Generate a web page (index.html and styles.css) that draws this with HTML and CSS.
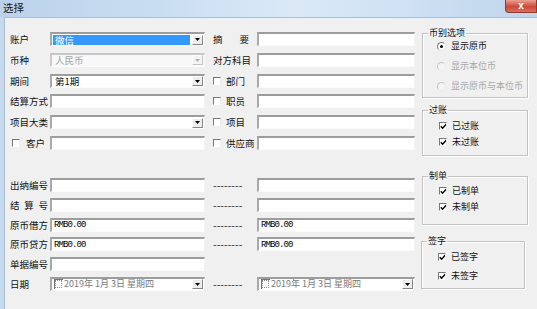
FILE: index.html
```html
<!DOCTYPE html>
<html lang="zh-CN">
<head>
    <meta charset="UTF-8">
    <title>选择</title>
    <link rel="stylesheet" href="styles.css">
</head>
<body>

<div class="window">
    <div class="titlebar">
        <span class="title">选择</span>
        <div class="close">x</div>
    </div>
    <div class="frame">
        <div class="client">

            <div class="main">
                <!-- upper block: account, currency, period ... -->
                <div class="grid top">
                    <span class="lbl">账户</span>
                    <div class="field combo"><span class="sel">微信</span><span class="dd"><svg width="5" height="3"><polygon points="0,0 5,0 2.5,3" fill="#000"/></svg></span></div>
                    <span class="lbl mid"><span class="spread">
                        <span>摘</span><span>要</span></span></span>
                    <div class="field"></div>

                    <span class="lbl">币种</span>
                    <div class="field combo disabled"><span class="val">人民币</span><span class="dd"><svg width="5" height="3"><polygon points="0,0 5,0 2.5,3" fill="#b0b0b0"/></svg></span></div>
                    <span class="lbl mid">对方科目</span>
                    <div class="field"></div>

                    <span class="lbl">期间</span>
                    <div class="field combo"><span class="val">第1期</span><span class="dd"><svg width="5" height="3"><polygon points="0,0 5,0 2.5,3" fill="#000"/></svg></span></div>
                    <span class="lbl mid chk"><span class="cb"></span><span>部门</span></span>
                    <div class="field"></div>

                    <span class="lbl">结算方式</span>
                    <div class="field"></div>
                    <span class="lbl mid chk"><span class="cb"></span><span>职员</span></span>
                    <div class="field"></div>

                    <span class="lbl">项目大类</span>
                    <div class="field combo"><span class="val"></span><span class="dd"><svg width="5" height="3"><polygon points="0,0 5,0 2.5,3" fill="#000"/></svg></span></div>
                    <span class="lbl mid chk"><span class="cb"></span><span>项目</span></span>
                    <div class="field"></div>

                    <span class="lbl chk left"><span class="cb"></span><span>客户</span></span>
                    <div class="field"></div>
                    <span class="lbl mid chk"><span class="cb"></span><span>供应商</span></span>
                    <div class="field"></div>
                </div>

                <!-- lower block: ranges from / to -->
                <div class="grid bottom">
                    <span class="lbl">出纳编号</span>
                    <div class="field"></div>
                    <span class="dash">--------</span>
                    <div class="field"></div>

                    <span class="lbl"><span class="spread wide">
                        <span>结</span><span>算</span><span>号</span></span></span>
                    <div class="field"></div>
                    <span class="dash">--------</span>
                    <div class="field"></div>

                    <span class="lbl">原币借方</span>
                    <div class="field"><span class="mono">RMB0.00</span></div>
                    <span class="dash">--------</span>
                    <div class="field"><span class="mono">RMB0.00</span></div>

                    <span class="lbl">原币贷方</span>
                    <div class="field"><span class="mono">RMB0.00</span></div>
                    <span class="dash">--------</span>
                    <div class="field"><span class="mono">RMB0.00</span></div>

                    <span class="lbl">单据编号</span>
                    <div class="field"></div>
                    <span></span>
                    <span></span>

                    <span class="lbl">日期</span>
                    <div class="field combo date"><span class="dcb"></span><span class="val">2019年 1月 3日 星期四</span><span class="dd"><svg width="5" height="3"><polygon points="0,0 5,0 2.5,3" fill="#000"/></svg></span></div>
                    <span class="dash">--------</span>
                    <div class="field combo date"><span class="dcb"></span><span class="val">2019年 1月 3日 星期四</span><span class="dd"><svg width="5" height="3"><polygon points="0,0 5,0 2.5,3" fill="#000"/></svg></span></div>
                </div>
            </div>

            <div class="side">
                <fieldset class="group g1">
                    <legend>币别选项</legend>
                    <div class="opt"><span class="rb on"></span><span>显示原币</span></div>
                    <div class="opt off"><span class="rb"></span><span>显示本位币</span></div>
                    <div class="opt off"><span class="rb"></span><span>显示原币与本位币</span></div>
                </fieldset>
                <fieldset class="group g2">
                    <legend>过账</legend>
                    <div class="opt"><span class="cb"><svg width="7" height="7"><polyline points="0.8,3.2 2.6,5.2 6.4,1" fill="none" stroke="#000" stroke-width="1.4"/></svg></span><span>已过账</span></div>
                    <div class="opt"><span class="cb"><svg width="7" height="7"><polyline points="0.8,3.2 2.6,5.2 6.4,1" fill="none" stroke="#000" stroke-width="1.4"/></svg></span><span>未过账</span></div>
                </fieldset>
                <fieldset class="group g3">
                    <legend>制单</legend>
                    <div class="opt"><span class="cb"><svg width="7" height="7"><polyline points="0.8,3.2 2.6,5.2 6.4,1" fill="none" stroke="#000" stroke-width="1.4"/></svg></span><span>已制单</span></div>
                    <div class="opt"><span class="cb"><svg width="7" height="7"><polyline points="0.8,3.2 2.6,5.2 6.4,1" fill="none" stroke="#000" stroke-width="1.4"/></svg></span><span>未制单</span></div>
                </fieldset>
                <fieldset class="group g4">
                    <legend>签字</legend>
                    <div class="opt"><span class="cb"><svg width="7" height="7"><polyline points="0.8,3.2 2.6,5.2 6.4,1" fill="none" stroke="#000" stroke-width="1.4"/></svg></span><span>已签字</span></div>
                    <div class="opt"><span class="cb"><svg width="7" height="7"><polyline points="0.8,3.2 2.6,5.2 6.4,1" fill="none" stroke="#000" stroke-width="1.4"/></svg></span><span>未签字</span></div>
                </fieldset>
            </div>

        </div>
    </div>
</div>

</body>
</html>
```

FILE: styles.css
```css
* {
    box-sizing: border-box;
}
body {
    margin: 0;
    width: 537px;
    height: 309px;
    overflow: hidden;
    font-family: "Noto Sans CJK SC", "Liberation Sans", sans-serif;
    font-size: 9.5px;
    color: #111;
    background-color: #c6daef;
}
.window {
    display: flex;
    flex-direction: column;
    height: 309px;
}
.titlebar {
    height: 17px;
    display: flex;
    justify-content: space-between;
    align-items: flex-start;
    background: linear-gradient(to right, #bcd2ea 0%, #cadef2 30%, #dbe9f7 55%, #cfe1f3 75%, #bfd5ec 100%);
}
.title {
    font-size: 10.5px;
    line-height: 16px;
    padding-left: 3px;
    color: #1a1a1a;
}
.close {
    width: 32px;
    height: 13px;
    border: 1px solid #8e3b2e;
    border-top: none;
    border-radius: 0 0 0 4px;
    background: linear-gradient(#e9a294, #cc4a36 55%, #d9705c);
    color: #fff;
    font: bold 10px/11px "Liberation Sans", sans-serif;
    text-align: center;
}
.frame {
    flex: 1;
    display: flex;
    padding-left: 4px;
    background-color: #c6daef;
}
.client {
    flex: 1;
    display: flex;
    background-color: #f0f0f0;
    border-left: 1px solid #aabfd6;
    border-top: 1px solid #aabfd6;
}
.main {
    padding: 14px 0 0 5px;
}
.grid {
    display: grid;
    grid-template-columns: 40px 155px 52px 158px;
    grid-auto-rows: 14px;
    align-items: center;
}
.grid.top {
    row-gap: 6.8px;
}
.grid.bottom {
    row-gap: 5.8px;
    margin-top: 28px;
}
.lbl {
    white-space: nowrap;
    line-height: 14px;
}
.mid {
    padding-left: 8px;
}
.spread {
    display: flex;
    justify-content: space-between;
    width: 36px;
}
.spread.wide {
    width: 38px;
}
.chk {
    display: flex;
    align-items: center;
    gap: 5px;
}
.chk.left {
    padding-left: 2px;
    gap: 6px;
}
.field {
    height: 14px;
    display: flex;
    align-items: center;
    padding-left: 1px;
    overflow: hidden;
    background-color: #fff;
    border-style: solid;
    border-width: 2px 1px 1px 2px;
    border-color: #9c9c9c #f2f2f2 #fbfbfb #a9a9a9;
    line-height: 10px;
    white-space: nowrap;
}
.val {
    flex: 1;
    padding-left: 2px;
}
.sel {
    flex: 1;
    height: 10px;
    margin-right: 2px;
    padding-left: 2px;
    background-color: #3399ff;
    color: #fff;
}
.dd {
    width: 11px;
    height: 10px;
    margin-left: auto;
    margin-right: 1px;
    display: flex;
    align-items: center;
    justify-content: center;
    background-color: #ededed;
    border: 1px solid;
    border-color: #fff #868686 #868686 #fff;
}
.disabled {
    background-color: #f8f8f8;
    border-color: #c6c6c6 #f6f6f6 #fff #cbcbcb;
    color: #a4a4a4;
}
.disabled .dd {
    border-color: #fff #c4c4c4 #c4c4c4 #fff;
    background-color: #f4f4f4;
}
.date .val {
    padding-left: 1px;
    font-size: 9px;
    color: #7a7a7a;
}
.dcb {
    width: 9px;
    height: 10px;
    margin-left: 1px;
    flex: none;
    border-top: 1px solid #777;
    border-left: 1px solid #777;
    outline: 1px dotted #888;
    outline-offset: -2px;
    background-color: #fff;
}
.mono {
    font-family: "Liberation Mono", monospace;
    font-size: 9px;
    letter-spacing: -0.9px;
    padding-left: 1px;
    color: #000;
}
.dash {
    font-family: "Liberation Sans", sans-serif;
    font-size: 11px;
    line-height: 14px;
    padding-left: 8px;
    color: #444;
}
.cb {
    width: 8px;
    height: 8px;
    flex: none;
    display: flex;
    align-items: center;
    justify-content: center;
    background-color: #fff;
    border-style: solid;
    border-width: 1px;
    border-color: #777 #ececec #fff #777;
}
.side {
    width: 106px;
    margin-left: 7px;
    padding-top: 9px;
    display: flex;
    flex-direction: column;
    font-size: 9px;
}
.group {
    margin: 0;
    min-width: 0;
    border: 1px solid #c3c3c3;
    box-shadow: inset 1px 1px 0 #fff, 1px 1px 0 #fff;
}
.group legend {
    margin-left: 1px;
    padding: 0 1px;
    font-size: 9px;
    line-height: 12px;
}
.opt {
    height: 12px;
    margin-left: 12px;
    display: flex;
    align-items: center;
    gap: 5px;
    white-space: nowrap;
    line-height: 12px;
}
.opt.off {
    color: #a8a8a8;
}
.rb {
    width: 9px;
    height: 9px;
    flex: none;
    display: flex;
    align-items: center;
    justify-content: center;
    border-radius: 50%;
    background-color: #fff;
    border: 1px solid;
    border-color: #7e7e7e #e2e2e2 #e2e2e2 #7e7e7e;
}
.rb.on::after {
    content: "";
    width: 3px;
    height: 3px;
    border-radius: 50%;
    background-color: #000;
}
.off .rb {
    background-color: #f4f4f4;
    border-color: #c6c6c6 #ececec #ececec #c6c6c6;
}
.g1 {
    padding: 1px 0 5px 4px;
    display: flex;
    flex-direction: column;
    gap: 8px;
}
.g1 .opt {
    margin-left: 10px;
    gap: 5px;
}
.g2 {
    margin-top: 6px;
    padding: 4px 0 7px 4px;
}
.g3 {
    margin-top: 14px;
    padding: 3px 0 11px 4px;
}
.g4 {
    margin: 10px 0 0 -1px;
    width: 104px;
    padding: 4px 0 6px 4px;
}
.g2 .opt + .opt, .g3 .opt + .opt {
    margin-top: 4px;
}
.g4 .opt + .opt {
    margin-top: 7px;
}
```
